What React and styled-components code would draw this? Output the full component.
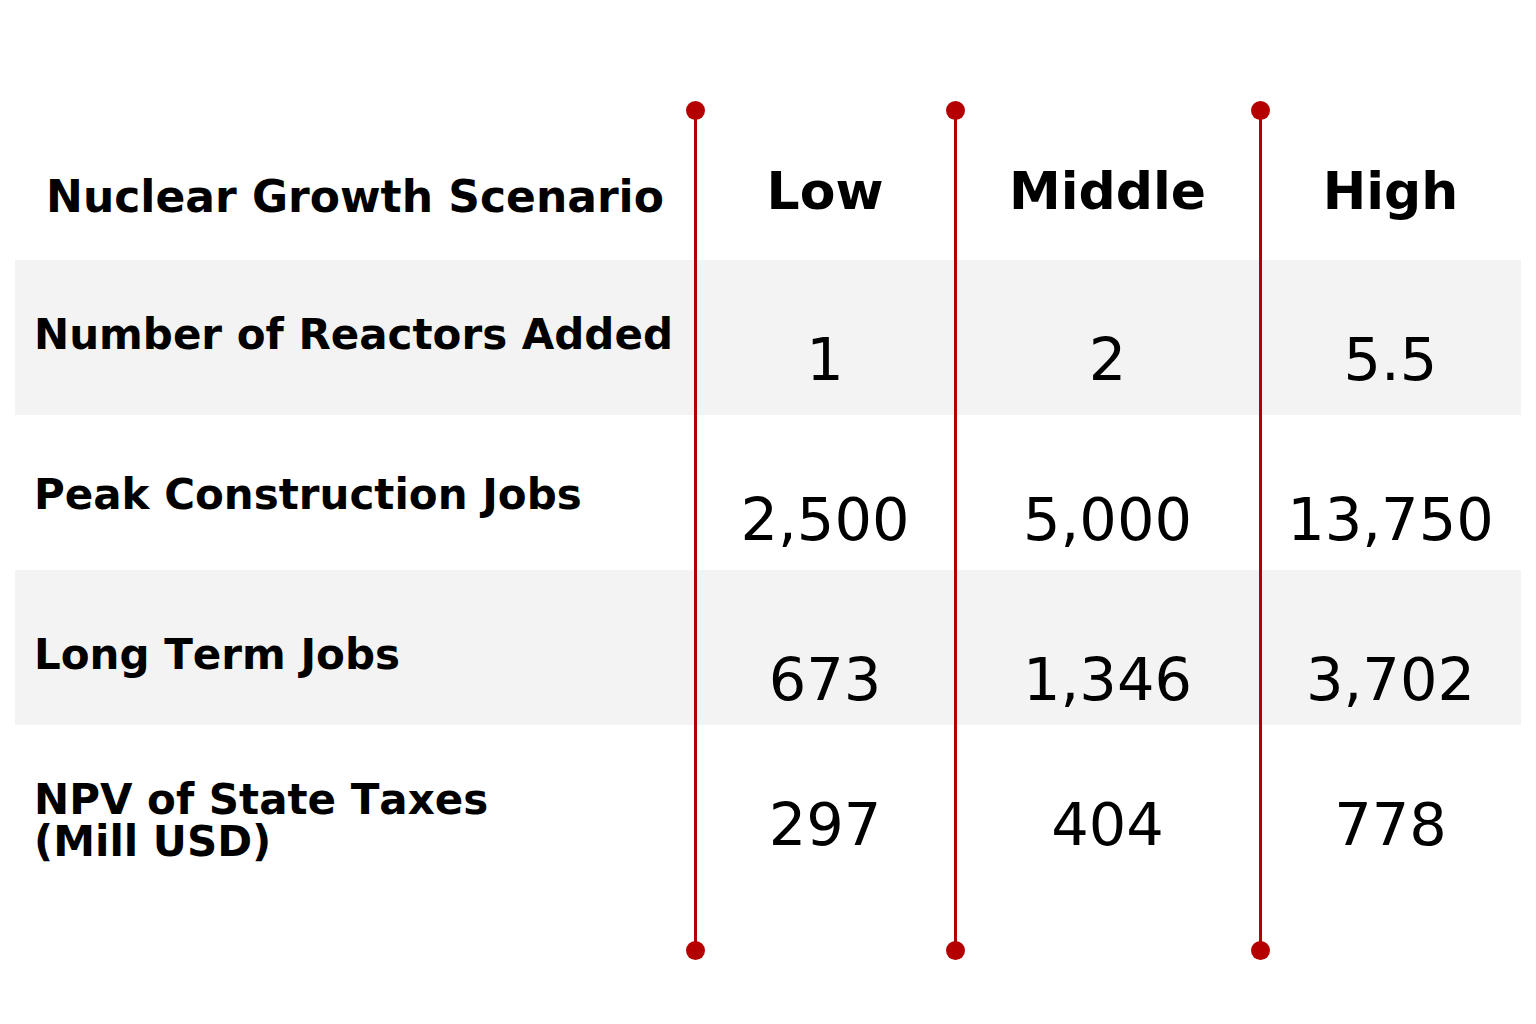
import React from 'react';
import styled, { createGlobalStyle } from 'styled-components';

const GlobalStyle = createGlobalStyle`
  html, body { margin: 0; padding: 0; background: #ffffff; }
  body {
    font-family: "DejaVu Sans", "Liberation Sans", sans-serif;
    color: #000;
    font-kerning: none;
  }
`;

const COL_WIDTHS = [680, 260, 305, 261];
const COLS = COL_WIDTHS.map((w) => `${w}px`).join(' ');
const RED = '#b40000';

const Page = styled.div`
  width: 1536px;
  height: 1024px;
  box-sizing: border-box;
  padding: 0 15px;
`;

const Table = styled.div`
  position: relative;
  width: 1506px;
`;

const HeaderRow = styled.div`
  display: grid;
  grid-template-columns: ${COLS};
  height: 260px;
  box-sizing: border-box;
  align-items: end;
  padding-bottom: 42px;
`;

const HeaderLabel = styled.div`
  font-size: 44px;
  font-weight: 700;
  line-height: 1;
  text-align: center;
  margin-bottom: -1px;
`;

const ColHead = styled.div`
  font-size: 52px;
  font-weight: 700;
  line-height: 1;
  text-align: center;
  margin-bottom: 1px;
`;

const DataRow = styled.div`
  display: grid;
  grid-template-columns: ${COLS};
  height: 155px;
  box-sizing: border-box;
  align-items: start;
  padding-top: ${(p) => p.$shift}px;
  background: ${(p) => (p.$shade ? '#f3f3f3' : 'transparent')};
`;

const RowLabel = styled.div`
  font-size: 42px;
  font-weight: 700;
  line-height: 1.01;
  padding-left: 19px;
  margin-top: 54px;
`;

const Value = styled.div`
  font-size: 59px;
  font-weight: 400;
  line-height: 1;
  text-align: center;
  margin-top: 70px;
`;

const Divider = styled.div`
  position: absolute;
  top: 110px;
  height: 840px;
  width: 3.5px;
  background: ${RED};

  &::before,
  &::after {
    content: '';
    position: absolute;
    left: 50%;
    width: 19px;
    height: 19px;
    margin-left: -9.5px;
    border-radius: 50%;
    background: ${RED};
  }
  &::before { top: -9.5px; }
  &::after { bottom: -9.5px; }
`;

const rows = [
  { label: ['Number of Reactors Added'], values: ['1', '2', '5.5'], shade: true, shift: 0 },
  { label: ['Peak Construction Jobs'], values: ['2,500', '5,000', '13,750'], shade: false, shift: 5 },
  { label: ['Long Term Jobs'], values: ['673', '1,346', '3,702'], shade: true, shift: 10 },
  { label: ['NPV of State Taxes', '(Mill USD)'], values: ['297', '404', '778'], shade: false, shift: 0 },
];

const dividerCenters = [
  COL_WIDTHS[0],
  COL_WIDTHS[0] + COL_WIDTHS[1],
  COL_WIDTHS[0] + COL_WIDTHS[1] + COL_WIDTHS[2],
].map((x) => x + 0.5);

export default function App() {
  return (
    <>
      <GlobalStyle />
      <Page>
        <Table>
          <HeaderRow>
            <HeaderLabel>Nuclear Growth Scenario</HeaderLabel>
            <ColHead>Low</ColHead>
            <ColHead>Middle</ColHead>
            <ColHead>High</ColHead>
          </HeaderRow>
          {rows.map((r) => (
            <DataRow key={r.label[0]} $shade={r.shade} $shift={r.shift}>
              <RowLabel>
                {r.label.map((line, i) => (
                  <React.Fragment key={line}>
                    {i > 0 && <br />}
                    {line}
                  </React.Fragment>
                ))}
              </RowLabel>
              {r.values.map((v, i) => (
                <Value key={i}>{v}</Value>
              ))}
            </DataRow>
          ))}
          {dividerCenters.map((c) => (
            <Divider key={c} style={{ left: `${c - 1.75}px` }} />
          ))}
        </Table>
      </Page>
    </>
  );
}
